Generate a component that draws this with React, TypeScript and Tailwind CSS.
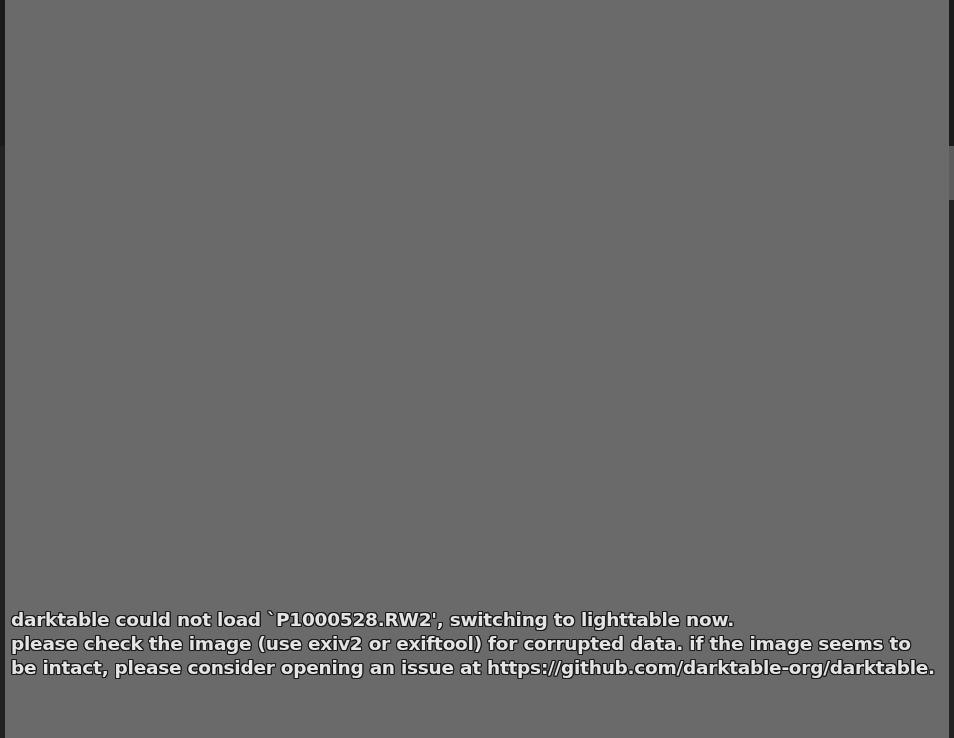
export default function App() {
  const lines = [
    "darktable could not load `P1000528.RW2', switching to lighttable now.",
    "please check the image (use exiv2 or exiftool) for corrupted data. if the image seems to",
    "be intact, please consider opening an issue at https://github.com/darktable-org/darktable.",
  ];

  return (
    <div className="flex h-[738px] w-full overflow-hidden bg-[#6a6a6a]">
      {/* left panel edge */}
      <div className="flex w-[5px] flex-col">
        <div className="h-[146px] bg-[#1b1b1b]" />
        <div className="flex-1 bg-[#222222]" />
      </div>

      {/* center view */}
      <div className="flex flex-1 flex-col justify-end pb-[58px] pl-[6px]">
        <div className="whitespace-nowrap font-['DejaVu_Sans','Verdana',sans-serif] text-[18.5px] font-bold leading-6 tracking-[-0.25px] text-[#e4e4e4] [filter:drop-shadow(1px_0_0_#1a1a1a)_drop-shadow(-1px_0_0_#1a1a1a)_drop-shadow(0_1px_0_#1a1a1a)_drop-shadow(0_-1px_0_#1a1a1a)]">
          {lines.map((l) => (
            <div key={l}>{l}</div>
          ))}
        </div>
      </div>

      {/* right scrollbar */}
      <div className="flex w-[5px] flex-col">
        <div className="h-[146px] bg-[#1b1b1b]" />
        <div className="h-[54px] bg-[#5c5c5c]" />
        <div className="flex-1 bg-[#222222]" />
      </div>
    </div>
  );
}
